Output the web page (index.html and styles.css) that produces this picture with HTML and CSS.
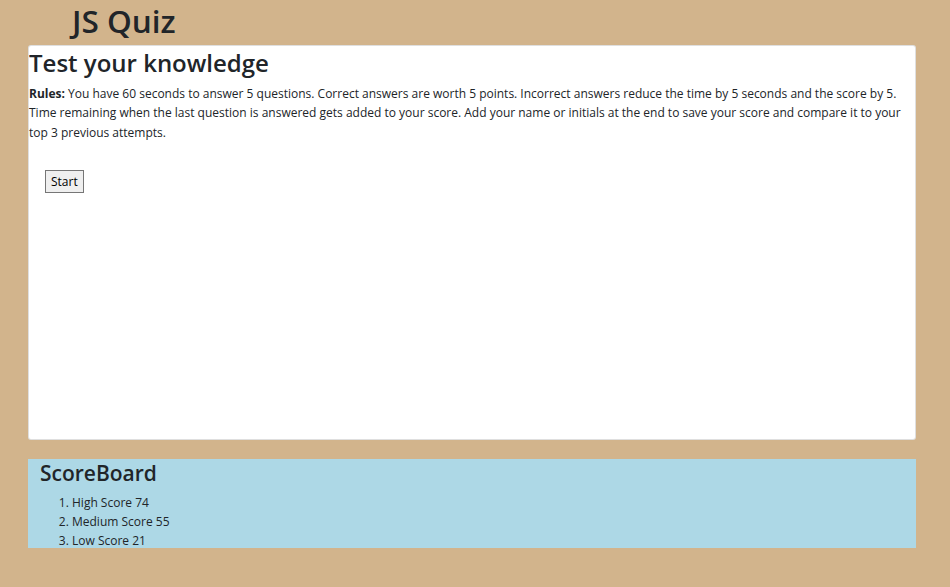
FILE: index.html
```html
<!DOCTYPE html>
<html lang="en">
<head>
<meta charset="utf-8">
<title>JS Quiz</title>
<link rel="stylesheet" href="styles.css">
</head>
<body>
<header class="site-header">
  <h1 class="site-title">JS Quiz</h1>
</header>
<main class="page">
  <section class="quiz-card">
    <h2 class="quiz-title">Test your knowledge</h2>
    <p class="rules"><strong>Rules:</strong> You have 60 seconds to answer 5 questions. Correct answers are worth 5 points. Incorrect answers reduce the time by 5 seconds and the score by 5. Time remaining when the last question is answered gets added to your score. Add your name or initials at the end to save your score and compare it to your top 3 previous attempts.</p>
    <div class="actions">
      <button class="start-btn" type="button">Start</button>
    </div>
  </section>
  <section class="scoreboard">
    <h3 class="scoreboard-title">ScoreBoard</h3>
    <ol class="score-list">
      <li>High Score 74</li>
      <li>Medium Score 55</li>
      <li>Low Score 21</li>
    </ol>
  </section>
</main>
</body>
</html>
```

FILE: styles.css
```css
* { box-sizing: border-box; }

html, body {
  margin: 0;
  padding: 0;
}

body {
  background: #d2b48c;
  color: #212529;
  font-family: "Open Sans", "Noto Sans", sans-serif;
  font-size: 12px;
  line-height: 19.2px;
  height: 587px;
  overflow: hidden;
}

.site-header {
  padding: 2px 0 0 72px;
  height: 45px;
}

.site-title {
  margin: 0;
  font-size: 31.5px;
  font-weight: 600;
  line-height: 38px;
}

.page {
  padding-left: 28px;
  width: 916px;
}

.quiz-card {
  background: #fff;
  border: 1px solid rgba(0, 0, 0, 0.125);
  border-radius: 3px;
  height: 395px;
}

.quiz-title {
  margin: 0 0 5.4px 0;
  padding-top: 2px;
  font-size: 24px;
  font-weight: 600;
  line-height: 30.7px;
}

.rules {
  margin: 0;
}

.actions {
  padding: 28px 0 0 16px;
}

.start-btn {
  font-family: inherit;
  font-size: 12px;
  line-height: 16px;
  color: #000;
  background: #efefef;
  border: 1px solid #767676;
  border-radius: 0;
  padding: 3px 5px 2px;
  height: 23px;
}

.scoreboard {
  margin-top: 19px;
  background: #add8e6;
  height: 89px;
  padding-left: 12px;
}

.scoreboard-title {
  margin: 0 0 6.4px 0;
  padding-top: 1px;
  font-size: 21px;
  font-weight: 600;
  line-height: 26.9px;
}

.score-list {
  margin: 0;
  padding-left: 32px;
  line-height: 19px;
}
```
